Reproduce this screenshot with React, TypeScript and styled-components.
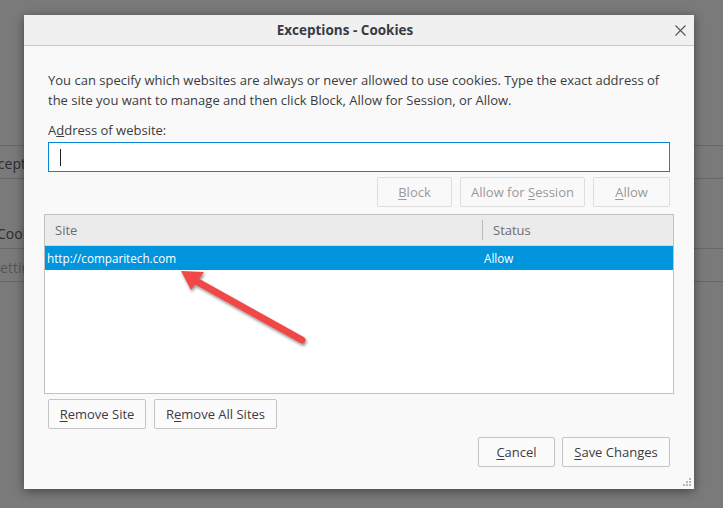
import React from "react";
import styled, { createGlobalStyle } from "styled-components";

const GlobalStyle = createGlobalStyle`
  html, body { margin: 0; padding: 0; }
  body {
    background: #7a7a7a;
    font-family: "Open Sans", "Noto Sans", Arial, sans-serif;
    font-size: 13px;
    color: #3b3b44;
  }
`;

const Page = styled.div`
  position: relative;
  width: 723px;
  height: 508px;
  overflow: hidden;
  background: #7a7a7a;
`;

const BgColumn = styled.div`
  display: flex;
  flex-direction: column;
  padding-top: 145px;
  width: 100%;
`;

const BgBox = styled.div<{ $gap?: number }>`
  height: 32px;
  margin-top: ${(p) => p.$gap ?? 0}px;
  border-top: 1px solid #676767;
  border-bottom: 1px solid #676767;
  display: flex;
  align-items: center;
  & + & { border-top: none; }
`;

const BgClip = styled.div<{ $w: number }>`
  width: ${(p) => p.$w}px;
  overflow: hidden;
  display: flex;
  justify-content: flex-end;
`;

const BgText = styled.span<{ $dim?: boolean }>`
  white-space: nowrap;
  font-size: 14px;
  padding-top: ${(p) => (p.$dim ? 4 : 2)}px;
  color: ${(p) => (p.$dim ? "#555" : "#2e2a30")};
`;

const Dialog = styled.div`
  position: absolute;
  left: 24px;
  top: 15px;
  width: 670px;
  height: 474px;
  background: #f9f9f9;
  box-shadow: 0 2px 10px rgba(0, 0, 0, 0.45);
  display: flex;
  flex-direction: column;
`;

const TitleBar = styled.div`
  position: relative;
  height: 30px;
  padding-right: 28px;
  background: #f0f0f0;
  border-bottom: 1px solid #c8c8c8;
  display: flex;
  align-items: center;
  justify-content: center;
  font-weight: 700;
  font-size: 13.5px;
  color: #3a3a44;
`;

const CloseButton = styled.div`
  position: absolute;
  right: 8px;
  top: 10px;
  width: 11px;
  height: 11px;
  display: flex;
`;

const Body = styled.div`
  flex: 1;
  display: flex;
  flex-direction: column;
  padding: 24px 20px 22px 20px;
`;

const Para = styled.p`
  margin: 0 4px;
  line-height: 20px;
  color: #3b3b44;
`;

const Label = styled.div`
  margin: 10px 4px 0;
  line-height: 20px;
`;

const Input = styled.div`
  margin: 2px 4px 0;
  height: 28px;
  border: 1px solid #0a84d4;
  background: #fff;
  display: flex;
  align-items: center;
  padding-left: 11px;
`;

const Caret = styled.div`
  width: 1px;
  height: 17px;
  background: #222;
`;

const Row = styled.div<{ $justify?: string; $gap?: number; $mt?: number }>`
  display: flex;
  justify-content: ${(p) => p.$justify ?? "flex-start"};
  gap: ${(p) => p.$gap ?? 8}px;
  margin: ${(p) => p.$mt ?? 0}px 4px 0;
`;

const Button = styled.div<{ $w: number; $disabled?: boolean }>`
  width: ${(p) => p.$w}px;
  height: 28px;
  box-sizing: content-box;
  border: 1px solid ${(p) => (p.$disabled ? "#dedede" : "#c4c4c4")};
  border-radius: 2px;
  background: ${(p) => (p.$disabled ? "#f9f9f9" : "#fbfbfb")};
  color: ${(p) => (p.$disabled ? "#9a9a9a" : "#3b3b44")};
  display: flex;
  align-items: center;
  justify-content: center;
  white-space: nowrap;
  u { text-decoration-thickness: 1px; text-underline-offset: 2px; }
`;

const Table = styled.div`
  margin-top: 7px;
  height: 178px;
  border: 1px solid #c1c1c1;
  background: #fff;
  display: flex;
  flex-direction: column;
`;

const HeaderRow = styled.div`
  height: 30px;
  background: #ebebeb;
  border-bottom: 1px solid #d6d6d6;
  display: grid;
  grid-template-columns: 437px 1fr;
  align-items: center;
  color: #6e6e6e;
`;

const HeaderCell = styled.div<{ $sep?: boolean }>`
  padding-left: 10px;
  height: 20px;
  line-height: 20px;
  border-left: ${(p) => (p.$sep ? "1px solid #b9b9b9" : "none")};
`;

const DataRow = styled.div<{ $selected?: boolean }>`
  height: 24px;
  display: grid;
  grid-template-columns: 437px 1fr;
  align-items: center;
  font-size: 11.7px;
  background: ${(p) => (p.$selected ? "#0095dd" : "transparent")};
  color: ${(p) => (p.$selected ? "#fff" : "#3b3b44")};
`;

const Cell = styled.div<{ $pad: number }>`
  padding-left: ${(p) => p.$pad}px;
`;

const Spacer = styled.div`
  flex: 1;
`;

const Grip = styled.div`
  position: absolute;
  right: 2px;
  bottom: 2px;
  width: 9px;
  height: 9px;
  display: flex;
`;

const ArrowLayer = styled.svg`
  position: absolute;
  left: 0;
  top: 0;
  pointer-events: none;
`;

export default function App() {
  return (
    <>
      <GlobalStyle />
      <Page>
        <BgColumn>
          <BgBox>
            <BgClip $w={26}>
              <BgText>Except</BgText>
            </BgClip>
          </BgBox>
          <BgBox $gap={37}>
            <BgClip $w={30}>
              <BgText>Cook</BgText>
            </BgClip>
          </BgBox>
          <BgBox>
            <BgClip $w={30}>
              <BgText $dim>Settin</BgText>
            </BgClip>
          </BgBox>
        </BgColumn>

        <Dialog>
          <TitleBar>
            Exceptions - Cookies
            <CloseButton>
              <svg width="11" height="11" viewBox="0 0 11 11">
                <path d="M0.5 0.5 L10.5 10.5 M10.5 0.5 L0.5 10.5" stroke="#555" strokeWidth="1.1" fill="none" />
              </svg>
            </CloseButton>
          </TitleBar>
          <Body>
            <Para>
              You can specify which websites are always or never allowed to use cookies. Type the exact address of
              <br />
              the site you want to manage and then click Block, Allow for Session, or Allow.
            </Para>
            <Label>
              A<u>d</u>dress of website:
            </Label>
            <Input>
              <Caret />
            </Input>
            <Row $justify="flex-end" $gap={8} $mt={5}>
              <Button $w={73} $disabled>
                <u>B</u>lock
              </Button>
              <Button $w={123} $disabled>
                Allow for&nbsp;<u>S</u>ession
              </Button>
              <Button $w={75} $disabled>
                <u>A</u>llow
              </Button>
            </Row>
            <Table>
              <HeaderRow>
                <HeaderCell>Site</HeaderCell>
                <HeaderCell $sep>Status</HeaderCell>
              </HeaderRow>
              <DataRow $selected>
                <Cell $pad={2}>http://comparitech.com</Cell>
                <Cell $pad={2}>Allow</Cell>
              </DataRow>
            </Table>
            <Row $mt={5}>
              <Button $w={96}>
                <u>R</u>emove Site
              </Button>
              <Button $w={121}>
                R<u>e</u>move All Sites
              </Button>
            </Row>
            <Spacer />
            <Row $justify="flex-end" $gap={7}>
              <Button $w={75}>
                <u>C</u>ancel
              </Button>
              <Button $w={106}>
                <u>S</u>ave Changes
              </Button>
            </Row>
          </Body>
          <Grip>
            <svg width="9" height="9" viewBox="0 0 9 9">
              <g fill="#b5b5b5">
                <rect x="6" y="0" width="2" height="2" />
                <rect x="3" y="3" width="2" height="2" />
                <rect x="6" y="3" width="2" height="2" />
                <rect x="0" y="6" width="2" height="2" />
                <rect x="3" y="6" width="2" height="2" />
                <rect x="6" y="6" width="2" height="2" />
              </g>
            </svg>
          </Grip>
        </Dialog>

        <ArrowLayer width="723" height="508" viewBox="0 0 723 508">
          <defs>
            <filter id="ashadow" x="-20%" y="-20%" width="140%" height="140%">
              <feDropShadow dx="1" dy="2" stdDeviation="1.5" floodColor="#000" floodOpacity="0.45" />
            </filter>
          </defs>
          <g filter="url(#ashadow)">
            <line x1="302" y1="340" x2="196" y2="281" stroke="#f04646" strokeWidth="7" strokeLinecap="round" />
            <polygon points="181,271 204,272 191,290" fill="#f04646" />
          </g>
        </ArrowLayer>
      </Page>
    </>
  );
}
